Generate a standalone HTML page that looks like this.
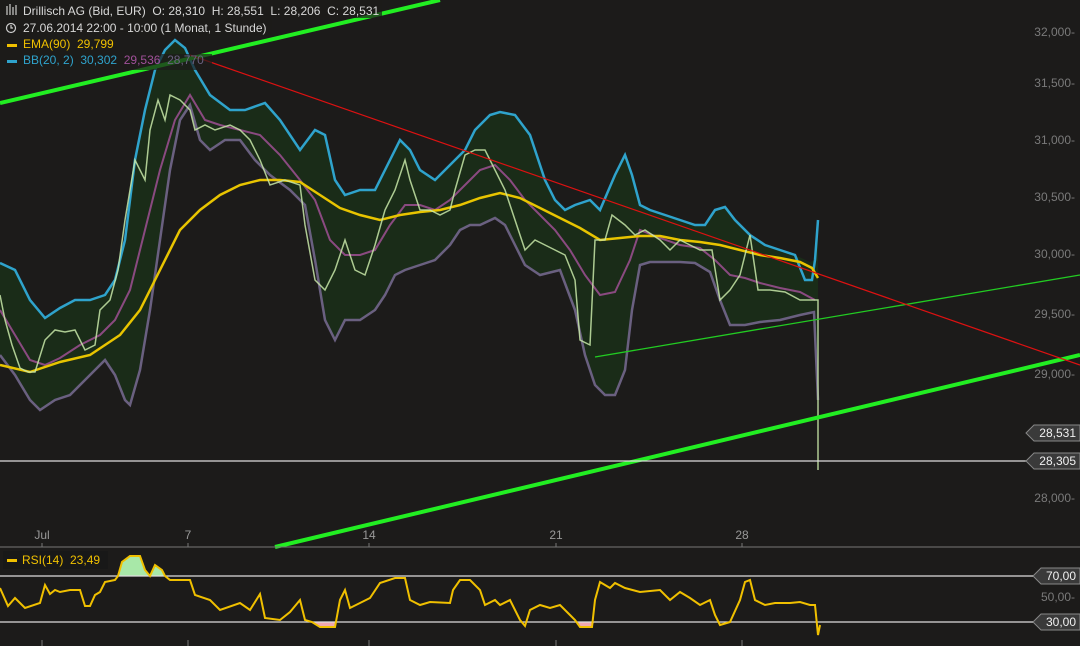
<!DOCTYPE html>
<html><head><meta charset="utf-8"><style>
html,body{margin:0;padding:0;background:#1c1b1a;}
svg{display:block;}
text{font-family:"Liberation Sans",sans-serif;white-space:pre;}
</style></head><body>
<svg width="1080" height="646" viewBox="0 0 1080 646" xmlns="http://www.w3.org/2000/svg" xml:space="preserve">
<rect width="1080" height="646" fill="#1c1b1a"/>
<polygon fill="#1a2c18" points="0,263 15,270 30,300 45,318 60,308 75,300 90,300 105,295 115,280 125,240 135,160 145,110 155,70 165,50 175,40 185,48 195,70 210,95 230,110 245,110 265,103 280,120 300,150 315,130 325,135 335,180 345,195 360,190 375,190 390,160 400,140 410,150 420,170 435,180 450,165 465,150 475,130 490,115 500,112 515,115 530,135 545,180 555,200 565,210 575,205 590,200 600,210 615,175 625,155 632,175 640,205 650,210 665,215 680,220 695,225 705,225 715,210 725,207 735,220 750,235 765,245 780,250 795,255 810,262 815,260 818,220 818,410 815,310 800,315 780,320 760,322 745,325 730,325 720,300 710,272 695,263 680,262 665,262 650,262 640,265 632,310 625,370 615,395 605,395 595,385 585,355 575,310 560,270 540,275 525,265 515,245 505,225 495,218 480,225 470,225 460,230 450,245 435,260 420,265 405,270 395,275 385,295 375,310 360,320 345,320 335,340 325,320 315,260 305,205 290,190 270,175 255,160 240,140 225,140 210,150 200,140 190,105 180,120 170,170 160,240 150,310 140,370 130,405 125,400 115,375 105,360 90,375 70,395 55,400 40,410 30,400 15,375 0,355"/>
<polyline fill="none" stroke="#2fa3cc" stroke-width="2.5" points="0,263 15,270 30,300 45,318 60,308 75,300 90,300 105,295 115,280 125,240 135,160 145,110 155,70 165,50 175,40 185,48 195,70 210,95 230,110 245,110 265,103 280,120 300,150 315,130 325,135 335,180 345,195 360,190 375,190 390,160 400,140 410,150 420,170 435,180 450,165 465,150 475,130 490,115 500,112 515,115 530,135 545,180 555,200 565,210 575,205 590,200 600,210 615,175 625,155 632,175 640,205 650,210 665,215 680,220 695,225 705,225 715,210 725,207 735,220 750,235 765,245 780,250 795,255 805,280 812,280 815,260 818,220"/>
<polyline fill="none" stroke="#6a6080" stroke-width="2.5" points="0,355 15,375 30,400 40,410 55,400 70,395 90,375 105,360 115,375 125,400 130,405 140,370 150,310 160,240 170,170 180,120 190,105 200,140 210,150 225,140 240,140 255,160 270,175 290,190 305,205 315,260 325,320 335,340 345,320 360,320 375,310 385,295 395,275 405,270 420,265 435,260 450,245 460,230 470,225 480,225 495,218 505,225 515,245 525,265 540,275 560,270 575,310 585,355 595,385 605,395 615,395 625,370 632,310 640,265 650,262 665,262 680,262 695,263 710,272 720,300 730,325 745,325 760,322 780,320 800,315 814,312 818,400"/>
<polyline fill="none" stroke="#8a4a80" stroke-width="2" points="0,310 15,335 30,360 45,365 60,358 80,345 100,335 115,320 130,290 145,230 160,170 175,120 190,95 205,120 220,125 240,130 260,135 280,155 300,180 315,200 330,240 345,255 360,255 375,250 390,225 405,205 420,205 435,210 450,200 465,185 480,170 495,165 510,180 525,200 540,215 555,230 570,250 585,275 600,295 615,292 630,260 640,230 660,238 680,245 700,248 715,260 730,275 745,278 760,283 780,288 800,292 815,300"/>
<polyline fill="none" stroke="#e8c400" stroke-width="2.5" points="0,365 30,372 60,362 90,355 120,335 140,310 160,270 180,230 200,210 220,195 240,185 260,180 280,180 300,182 320,195 340,208 360,215 380,220 400,215 420,212 440,210 460,205 480,198 500,193 520,198 540,208 560,218 580,228 600,240 620,238 640,236 660,236 680,240 700,242 720,245 740,250 760,255 780,258 800,262 812,268 818,278"/>
<polyline fill="none" stroke="#c8e8a8" stroke-width="1.5" opacity="0.85" points="0,295 5,320 12,345 20,368 28,372 35,372 45,340 55,330 65,332 75,330 85,350 95,345 100,310 110,300 118,270 125,220 135,160 145,180 150,130 158,100 165,120 170,95 180,100 190,110 195,130 205,125 215,130 230,125 240,130 250,140 260,160 270,185 285,180 300,185 305,225 315,280 325,290 335,270 345,240 355,270 365,275 375,245 385,210 395,190 405,160 410,180 420,210 430,210 440,215 450,210 455,190 465,155 475,150 485,150 495,170 505,190 515,220 525,250 535,240 545,245 555,250 565,255 575,280 580,340 590,345 595,240 605,240 612,215 625,225 635,235 645,230 660,240 670,250 680,240 690,245 700,250 712,250 720,300 730,290 740,275 750,235 758,290 770,290 785,292 800,300 812,300 818,300 818,470"/>
<line x1="0" y1="103" x2="440" y2="0" stroke="#22ee22" stroke-width="4"/>
<line x1="275" y1="547" x2="1080" y2="355" stroke="#22ee22" stroke-width="4"/>
<line x1="595" y1="357" x2="1080" y2="275" stroke="#22cc22" stroke-width="1.3"/>
<line x1="190" y1="55" x2="1080" y2="365" stroke="#dd1111" stroke-width="1.2"/>
<line x1="0" y1="461" x2="1030" y2="461" stroke="#dddddd" stroke-width="1.2"/>
<rect x="0" y="0" width="382" height="18" fill="#1c1b1a" opacity="0.7"/>
<rect x="0" y="18" width="272" height="18" fill="#1c1b1a" opacity="0.7"/>
<rect x="0" y="36" width="120" height="18" fill="#1c1b1a" opacity="0.7"/>
<rect x="0" y="54" width="212" height="16" fill="#1c1b1a" opacity="0.7"/>
<g font-size="12">
<text x="23" y="15" fill="#d8d8d8">Drillisch AG (Bid, EUR)  O: 28,310  H: 28,551  L: 28,206  C: 28,531</text>
<text x="23" y="32" fill="#d8d8d8">27.06.2014 22:00 - 10:00 (1 Monat, 1 Stunde)</text>
<text x="23" y="48" fill="#f0c000">EMA(90)  29,799</text>
<text x="23" y="64" fill="#2fa3cc">BB(20, 2)  30,302  <tspan fill="#a0509a">29,536</tspan>  <tspan fill="#6a6080">28,770</tspan></text>
</g>
<g stroke="#ccc" stroke-width="1.2" fill="none"><circle cx="11" cy="28" r="4.5"/><path d="M11 25v3h2"/><path d="M7 6v9M10 4v11M13 7v8M16 5v10"/></g>
<rect x="7" y="44" width="10" height="3" fill="#f0c000"/>
<rect x="7" y="60" width="10" height="3" fill="#2fa3cc"/>
<g font-size="12" fill="#7a7a7a" text-anchor="end">
<text x="1075" y="36">32,000-</text><text x="1075" y="87">31,500-</text><text x="1075" y="144">31,000-</text><text x="1075" y="201">30,500-</text><text x="1075" y="258">30,000-</text><text x="1075" y="318">29,500-</text><text x="1075" y="378">29,000-</text><text x="1075" y="502">28,000-</text>
<text x="1075" y="601">50,00-</text>
</g>
<g fill="#3a3a3a" stroke="#888" stroke-width="1">
<path d="M1026 433 L1034 425 H1080 V441 H1034Z"/>
<path d="M1026 461 L1034 453 H1080 V469 H1034Z"/>
<path d="M1033 576 L1041 568 H1080 V584 H1041Z"/>
<path d="M1033 622 L1041 614 H1080 V630 H1041Z"/>
</g>
<g font-size="12" fill="#f0f0f0" text-anchor="end">
<text x="1076" y="437">28,531</text><text x="1076" y="465">28,305</text><text x="1076" y="580">70,00</text><text x="1076" y="626">30,00</text>
</g>
<g font-size="12" fill="#999" text-anchor="middle"><text x="42" y="539">Jul</text><text x="188" y="539">7</text><text x="369" y="539">14</text><text x="556" y="539">21</text><text x="742" y="539">28</text></g>
<line x1="0" y1="547" x2="1080" y2="547" stroke="#777" stroke-width="1"/>
<g stroke="#777"><line x1="42" y1="543" x2="42" y2="547"/><line x1="188" y1="543" x2="188" y2="547"/><line x1="369" y1="543" x2="369" y2="547"/><line x1="556" y1="543" x2="556" y2="547"/><line x1="742" y1="543" x2="742" y2="547"/>
<line x1="42" y1="640" x2="42" y2="646"/><line x1="188" y1="640" x2="188" y2="646"/><line x1="369" y1="640" x2="369" y2="646"/><line x1="556" y1="640" x2="556" y2="646"/><line x1="742" y1="640" x2="742" y2="646"/></g>
<polygon fill="#a8e8a8" points="117,576 122,562 130,556 140,556 145,570 150,576 155,565 162,570 165,576"/>
<polygon fill="#f0a8b0" points="312,622 320,627 335,627 337,622"/>
<polygon fill="#f0a8b0" points="578,622 580,627 592,627 594,622"/>
<line x1="0" y1="576" x2="1033" y2="576" stroke="#dddddd" stroke-width="1.2"/>
<line x1="0" y1="622" x2="1033" y2="622" stroke="#dddddd" stroke-width="1.2"/>
<polyline fill="none" stroke="#f0c000" stroke-width="2" points="0,588 8,606 15,598 25,608 40,603 45,585 50,594 55,590 60,592 70,590 80,590 85,606 90,606 95,595 100,592 105,582 115,580 118,576 122,562 130,556 140,556 145,570 150,576 155,565 162,570 165,576 170,580 190,580 195,595 210,600 220,610 240,603 250,610 260,594 265,618 280,620 290,612 300,600 305,620 312,622 320,627 335,627 340,600 345,590 350,608 370,598 380,583 395,578 405,578 410,600 420,605 430,602 450,603 453,590 460,580 470,580 480,590 485,605 495,600 500,605 510,600 520,620 525,626 530,610 540,605 550,608 560,605 570,615 575,620 580,627 592,627 595,600 600,582 610,588 615,583 625,588 640,592 660,590 670,600 680,592 690,598 700,605 710,600 715,615 720,625 730,622 740,600 745,582 750,580 755,600 765,605 775,603 790,603 800,602 810,605 815,605 818,635 820,625"/>
<rect x="3" y="551" width="105" height="18" fill="#181818"/>
<rect x="7" y="559" width="10" height="3" fill="#f0c000"/>
<text x="22" y="564" font-size="12" fill="#f0c000">RSI(14)  23,49</text>
</svg>
</body></html>
